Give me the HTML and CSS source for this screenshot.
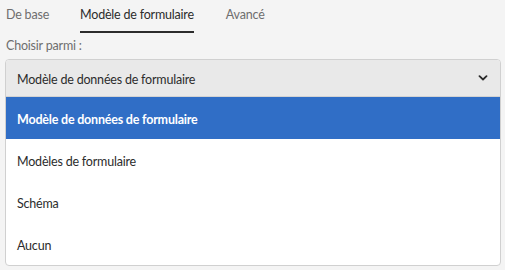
FILE: index.html
```html
<!DOCTYPE html>
<html lang="fr">
<head>
<meta charset="utf-8">
<link rel="stylesheet" href="styles.css">
</head>
<body>
<div class="panel">
  <nav class="tabs">
    <div class="tab">De base</div>
    <div class="tab active">Modèle de formulaire</div>
    <div class="tab">Avancé</div>
  </nav>
  <div class="label">Choisir parmi :</div>
  <div class="select">
    <div class="select-head">
      <span class="value">Modèle de données de formulaire</span>
      <svg class="chev" width="10" height="6" viewBox="0 0 10 6"><path d="M1.5 1.2 L5 4.5 L8.5 1.2" fill="none" stroke="#2c2c2c" stroke-width="1.8" stroke-linecap="round" stroke-linejoin="round"/></svg>
    </div>
    <ul class="options">
      <li class="opt selected">Modèle de données de formulaire</li>
      <li class="opt">Modèles de formulaire</li>
      <li class="opt">Schéma</li>
      <li class="opt">Aucun</li>
    </ul>
  </div>
</div>
</body>
</html>
```

FILE: styles.css
```css
html, body {
  margin: 0;
  padding: 0;
  background: #f4f4f4;
}
body {
  font-family: "Lato", "Open Sans", sans-serif;
  font-size: 12.5px;
  letter-spacing: -0.2px;
  color: #4b4b4b;
}
.panel {
  padding: 0 5px 0 5px;
  width: 496px;
}
.tabs {
  display: flex;
  gap: 32px;
  padding-left: 1px;
  height: 33px;
}
.tab {
  padding-top: 6px;
  height: 25px;
  line-height: 18px;
  color: #6e6e6e;
}
.tab.active {
  color: #2c2c2c;
  border-bottom: 2px solid #2c2c2c;
  padding: 6px 0 0 0;
  margin-left: -1px;
}
.label {
  height: 26px;
  line-height: 26px;
  padding-left: 1px;
  color: #6e6e6e;
}
.select {
  border: 1px solid #d0d0d0;
  border-radius: 4px;
  background: #ffffff;
  overflow: hidden;
}
.select-head {
  display: flex;
  align-items: center;
  justify-content: space-between;
  height: 36px;
  padding: 0 12px 0 11px;
  background: #e9e9e9;
  border-bottom: 1px solid #d3d3d3;
  color: #2c2c2c;
}
.value {
  padding-top: 2px;
}
.options {
  list-style: none;
  margin: 0;
  padding: 0;
}
.opt {
  height: 38px;
  line-height: 38px;
  padding: 4px 0 0 11px;
  color: #2c2c2c;
}
.opt.selected {
  background: #306ec6;
  color: #ffffff;
  font-weight: 700;
}
```
